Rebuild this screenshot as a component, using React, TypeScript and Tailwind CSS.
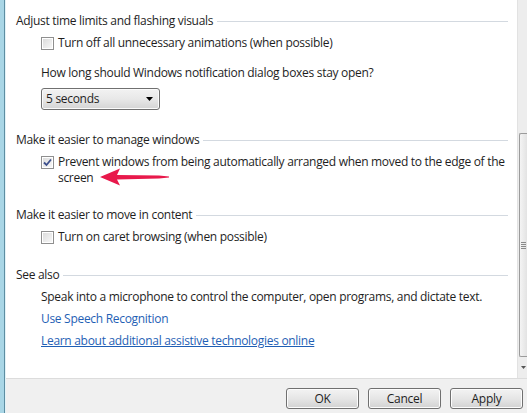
import React from "react";

function Heading({ text }: { text: string }) {
  return (
    <div className="flex items-center h-[16px] leading-[16px]">
      <span className="whitespace-nowrap">{text}</span>
      <div className="flex-1 h-px bg-[#d3d9e0] ml-[4px]" />
    </div>
  );
}

function Checkbox({ checked = false }: { checked?: boolean }) {
  return (
    <div className="w-[13px] h-[13px] border border-[#8f8f8f] bg-white p-px shrink-0">
      <div className="w-full h-full bg-gradient-to-br from-[#dcdcdc] to-[#f7f7f7] flex items-center justify-center">
        {checked && (
          <svg width="9" height="9" viewBox="0 0 9 9">
            <path d="M1 4.5 L3.5 7 L8 1.5" stroke="#3c4f8c" strokeWidth="1.8" fill="none" />
          </svg>
        )}
      </div>
    </div>
  );
}

function CheckRow({ checked, lines }: { checked?: boolean; lines: string[] }) {
  return (
    <div className="flex items-start pl-[25px]">
      <div className="mt-[2px]">
        <Checkbox checked={checked} />
      </div>
      <div className="ml-[4px] leading-[16px] whitespace-nowrap">
        {lines.map((l) => (
          <div key={l}>{l}</div>
        ))}
      </div>
    </div>
  );
}

function Button({ label }: { label: string }) {
  return (
    <div className="w-[73px] h-[21px] border border-[#707070] rounded-[3px] bg-gradient-to-b from-[#f3f3f3] via-[#e6e6e6] to-[#d2d2d2] flex items-center justify-center leading-none shadow-[inset_0_0_0_1px_#fcfcfc]">
      {label}
    </div>
  );
}

export default function App() {
  return (
    <div
      className="w-[527px] h-[413px] flex overflow-hidden bg-white text-[12px] tracking-[-0.3px] text-[#1e1e1e]"
      style={{ fontFamily: '"Open Sans", "Noto Sans", sans-serif' }}
    >
      <div className="flex shrink-0">
        <div className="w-[4px] bg-[#a9d6e6]" />
        <div className="w-px bg-[#5d8ea2]" />
        <div className="w-px bg-[#e3f3f8]" />
      </div>
      <div className="flex-1 min-w-0 flex flex-col">
        <div className="flex flex-1 min-h-0">
          <div className="flex-1 min-w-0 overflow-hidden pl-[10px] pr-[9px] pt-[13px] relative">
            <Heading text="Adjust time limits and flashing visuals" />
            <div className="mt-[6px]">
              <CheckRow lines={["Turn off all unnecessary animations (when possible)"]} />
            </div>
            <div className="mt-[14px] pl-[25px] leading-[16px]">
              How long should Windows notification dialog boxes stay open?
            </div>
            <div className="mt-[7px] ml-[25px] w-[119px] h-[22px] border border-[#707070] rounded-[3px] bg-gradient-to-b from-[#f2f2f2] via-[#e8e8e8] to-[#d4d4d4] flex items-center justify-between pl-[4px] pr-[6px] shadow-[inset_0_0_0_1px_#fbfbfb]">
              <span>5 seconds</span>
              <svg width="7" height="4" viewBox="0 0 7 4">
                <path d="M0 0 H7 L3.5 4 Z" fill="#000" />
              </svg>
            </div>
            <div className="mt-[22px]">
              <Heading text="Make it easier to manage windows" />
            </div>
            <div className="mt-[6px]">
              <CheckRow
                checked
                lines={[
                  "Prevent windows from being automatically arranged when moved to the edge of the",
                  "screen",
                ]}
              />
            </div>
            <svg
              className="absolute left-[93px] top-[166px]"
              width="72"
              height="22"
              viewBox="0 0 72 22"
            >
              <path
                d="M1 11 L21 2.5 L18 9 L60 9.6 L70 10.4 L70 11.6 L60 12.4 L18 13.6 L21 19.5 Z"
                fill="#e8194b"
              />
            </svg>
            <div className="mt-[21px]">
              <Heading text="Make it easier to move in content" />
            </div>
            <div className="mt-[6px]">
              <CheckRow lines={["Turn on caret browsing (when possible)"]} />
            </div>
            <div className="mt-[22px]">
              <Heading text="See also" />
            </div>
            <div className="pl-[25px] leading-[16px] whitespace-nowrap">
              <div className="mt-[6px]">
                Speak into a microphone to control the computer, open programs, and dictate text.
              </div>
              <div className="mt-[6px] text-[#1f5fb5]">Use Speech Recognition</div>
              <div className="mt-[6px] text-[#1f5fb5] underline">
                Learn about additional assistive technologies online
              </div>
            </div>
          </div>
          <div className="w-[10px] shrink-0 bg-[#ededed] border-l border-[#e2e2e2] flex flex-col">
            <div className="h-[133px]" />
            <div className="h-[224px] ml-[1px] border border-r-0 border-[#9b9b9b] rounded-l-[2px] bg-gradient-to-r from-[#f4f4f4] to-[#e3e3e3] flex items-center justify-center">
              <div className="flex flex-col gap-[1px]">
                <div className="w-[5px] h-px bg-[#8a8a8a]" />
                <div className="w-[5px] h-px bg-[#8a8a8a]" />
                <div className="w-[5px] h-px bg-[#8a8a8a]" />
                <div className="w-[5px] h-px bg-[#8a8a8a]" />
              </div>
            </div>
            <div className="flex-1 flex items-center justify-end pr-[1px]">
              <svg width="5" height="3" viewBox="0 0 5 3">
                <path d="M0 0 H5 L2.5 3 Z" fill="#555" />
              </svg>
            </div>
          </div>
        </div>
        <div className="h-[35px] shrink-0 bg-[#f0f0f0] border-t border-[#dcdcdc] flex items-start justify-end gap-[9px] pt-[9px] pr-[4px]">
          <Button label="OK" />
          <Button label="Cancel" />
          <Button label="Apply" />
        </div>
      </div>
    </div>
  );
}
